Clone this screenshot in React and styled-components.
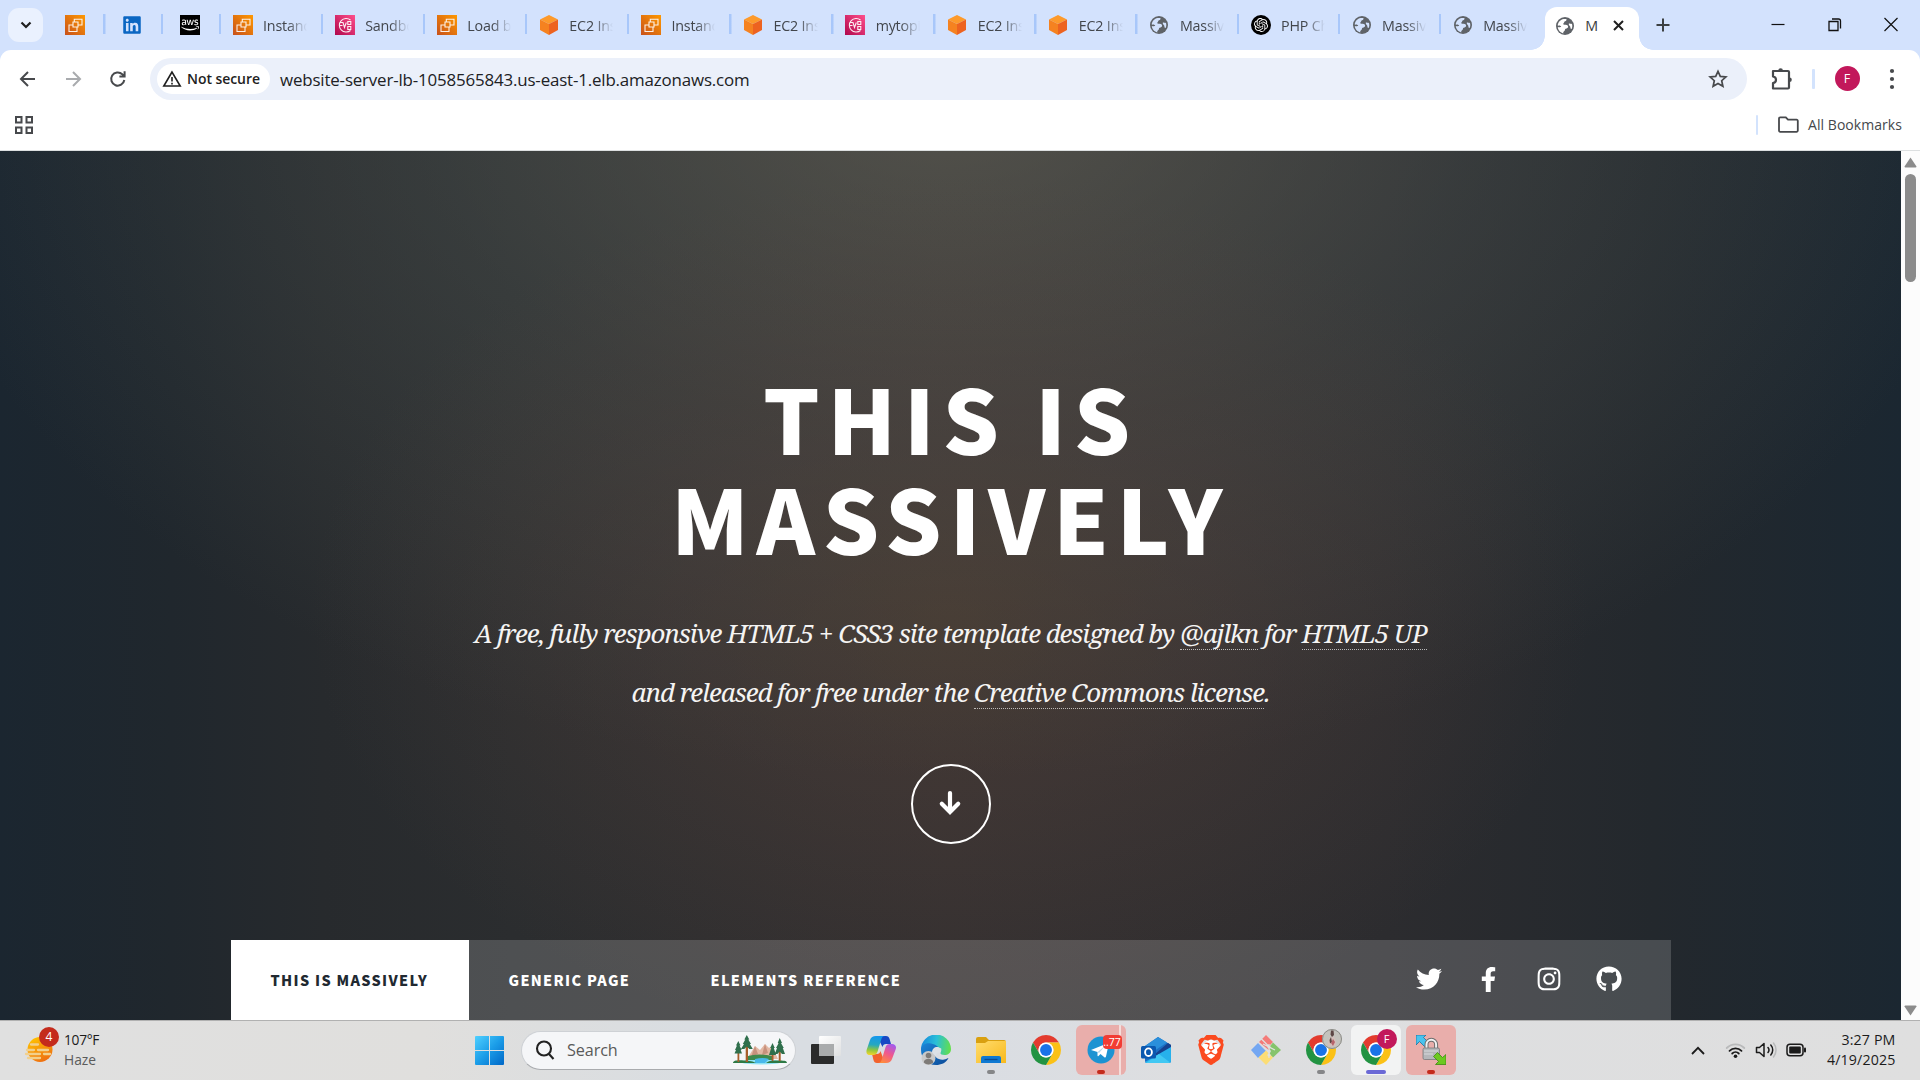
import React from 'react';
import styled, { createGlobalStyle } from 'styled-components';
import { FaTwitter, FaFacebookF, FaInstagram, FaGithub, FaLinkedin, FaAws } from 'react-icons/fa';
import { SiOpenai, SiBrave } from 'react-icons/si';

const GlobalStyle = createGlobalStyle`
  * { box-sizing: border-box; }
  body { margin: 0; overflow: hidden; }
  svg { display: block; flex: none; }
`;

const Screen = styled.div`
  width: 1920px;
  height: 1080px;
  display: flex;
  flex-direction: column;
  overflow: hidden;
  font-family: 'Open Sans', 'Noto Sans', sans-serif;
  color: #1f1f1f;
`;

/* ---------- tab strip ---------- */
const TabStrip = styled.header`
  height: 50px;
  flex: none;
  display: flex;
  background: #d3e2fd;
`;
const TabSearch = styled.button`
  width: 35px;
  height: 34px;
  margin: 8px 5px 0 8px;
  border: 0;
  padding: 0;
  border-radius: 11px;
  background: #eaf1fe;
  display: grid;
  place-items: center;
  flex: none;
`;
const Tab = styled.div`
  width: ${(p) => (p.$pinned ? 57.7 : p.$width)}px;
  height: 50px;
  flex: none;
  display: flex;
  align-items: center;
  padding-left: ${(p) => (p.$pinned ? 16.7 : 11.5)}px;
  background: ${(p) => (p.$last ? 'none' : 'linear-gradient(#a8c7fa, #a8c7fa) right 0 top 14px / 2.5px 20px no-repeat')};
`;
const TabIcon = styled.span`
  width: 20px;
  height: 20px;
  flex: none;
  display: grid;
  place-items: center;
`;
const TabTitle = styled.span`
  width: 45px;
  margin: 1px 0 0 10.5px;
  overflow: hidden;
  white-space: nowrap;
  font-size: 14.3px;
  line-height: 22px;
  letter-spacing: -0.2px;
  color: #42464c;
  mask-image: linear-gradient(90deg, #000 55%, transparent 98%);
`;
const ActiveTab = styled.div`
  width: 94px;
  height: 43px;
  margin: 7px 0 0 3px;
  flex: none;
  display: flex;
  align-items: center;
  gap: 10px;
  padding: 0 14px 6px 10px;
  border-radius: 12px 12px 0 0;
  background: #fff;
  font-size: 14.3px;
  position: relative;
  &::before, &::after {
    content: '';
    position: absolute;
    bottom: 0;
    width: 14px;
    height: 14px;
  }
  &::before { left: -14px; background: radial-gradient(circle at 0 0, transparent 13.5px, #fff 14px); }
  &::after { right: -14px; background: radial-gradient(circle at 100% 0, transparent 13.5px, #fff 14px); }
`;
const ActiveTitle = styled.span`
  width: 18px;
  overflow: hidden;
  line-height: 22px;
  letter-spacing: -0.5px;
  color: #3a3d41;
`;
const NewTab = styled.div`
  padding: 18px 0 0 17px;
`;
const WindowButtons = styled.div`
  margin-left: auto;
  display: flex;
  gap: 42.5px;
  padding: 17px 22px 0 0;
`;

/* ---------- toolbar ---------- */
const ToolbarWrap = styled.div`
  background: #d3e2fd;
  flex: none;
`;
const Toolbar = styled.div`
  height: 58px;
  display: flex;
  align-items: center;
  padding: 0 21px 1px 18px;
  background: #fff;
  border-radius: 11px 11px 0 0;
`;
const NavIcons = styled.div`
  display: flex;
  gap: 25px;
  margin-right: 22px;
`;
const Omnibox = styled.div`
  width: 1597px;
  height: 42px;
  border-radius: 21px;
  background: #ebf0fa;
  display: flex;
  align-items: center;
  padding: 0 19px 0 7px;
`;
const Security = styled.div`
  width: 113px;
  height: 30px;
  border-radius: 15px;
  background: #fff;
  display: flex;
  align-items: center;
  gap: 5px;
  padding-left: 5px;
  font-size: 14px;
  font-weight: 600;
  letter-spacing: -0.06px;
  white-space: nowrap;
`;
const Url = styled.span`
  flex: 1;
  margin: 2px 0 0 10px;
  font-size: 16.9px;
  letter-spacing: -0.16px;
  color: #202124;
`;
const ToolbarEnd = styled.div`
  flex: 1;
  display: flex;
  align-items: center;
  padding-left: 23px;
`;
const Rule = styled.i`
  width: 2.5px;
  height: 20px;
  border-radius: 1px;
  background: #d3e3fd;
  margin: ${(p) => p.$margin};
`;
const Avatar = styled.span`
  width: 25px;
  height: 25px;
  border-radius: 50%;
  background: #c2185b;
  color: #fff;
  font-size: 12.5px;
  line-height: 25px;
  text-align: center;
  margin-right: 27px;
`;
const BookmarkBar = styled.div`
  height: 43px;
  flex: none;
  display: flex;
  align-items: center;
  padding: 0 18px 9px 14px;
  background: #fff;
  border-bottom: 1px solid #dcdfe0;
  font-size: 14px;
  color: #45484c;
`;
const AllBookmarks = styled.div`
  margin-left: auto;
  display: flex;
  align-items: center;
  white-space: nowrap;
  svg { margin-right: 9px; }
  letter-spacing: 0.05px;
`;

/* ---------- page ---------- */
const Viewport = styled.div`
  height: 869px;
  flex: none;
  display: flex;
`;
const Hero = styled.main`
  width: 1901px;
  display: flex;
  flex-direction: column;
  align-items: center;
  color: #fff;
  background:
    radial-gradient(ellipse 640px 440px at 50% 53%, rgba(98, 74, 54, 0.4), rgba(96, 72, 62, 0.27) 42%, rgba(80, 66, 64, 0) 100%),
    radial-gradient(ellipse 1050px 680px at 50% -6%, rgba(106, 106, 94, 0.58), rgba(82, 90, 86, 0.34) 50%, rgba(58, 68, 72, 0) 100%),
    linear-gradient(90deg, #1b2630 0%, #20272d 9%, #272a2d 17%, #2b2d2f 27%, #322f30 50%, #2c2c2f 73%, #23282d 87%, #1b2731 100%);
`;
const Title = styled.h1`
  margin: 216px 0 0;
  width: 700px;
  text-align: center;
  text-transform: uppercase;
  font: 900 88.7px/100px 'Noto Sans CJK JP', 'Noto Sans', sans-serif;
  letter-spacing: 7.7px;
`;
const Intro = styled.p`
  margin: 36.5px 0 0;
  text-align: center;
  white-space: nowrap;
  font: italic 26px/59px 'Noto Serif', 'DejaVu Serif Condensed', 'DejaVu Serif', serif;
  letter-spacing: -1.07px;
  color: #f5f4f3;
`;
const Link = styled.a`
  display: inline-block;
  height: 34px;
  line-height: 35px;
  border-bottom: 1px dotted rgba(255, 255, 255, 0.65);
`;
const ScrollDown = styled.div`
  width: 80px;
  height: 80px;
  margin: 42px 0 0 1px;
  border: 2.5px solid #fff;
  border-radius: 50%;
  display: grid;
  place-items: center;
  padding: 0 3px 1px 0;
`;
const SiteNav = styled.nav`
  width: 1440px;
  height: 80px;
  margin-top: auto;
  display: flex;
  background: rgba(255, 255, 255, 0.17);
`;
const NavLink = styled.a`
  width: ${(p) => p.$width}px;
  height: 80px;
  padding-left: 40px;
  display: flex;
  align-items: center;
  white-space: nowrap;
  font: 900 14.4px/20px 'Noto Sans CJK JP', 'Noto Sans', sans-serif;
  letter-spacing: 1.33px;
  background: ${(p) => (p.$active ? '#fff' : 'none')};
  color: ${(p) => (p.$active ? '#212931' : '#fff')};
`;
const Social = styled.div`
  margin-left: auto;
  padding: 0 32px 2px 0;
  display: grid;
  grid-template-columns: repeat(4, 60px);
  align-items: center;
  justify-items: center;
`;
const ScrollTrack = styled.div`
  width: 19px;
  background: #fcfcfc;
  display: flex;
  flex-direction: column;
  align-items: center;
  padding: 6px 0 4px;
`;
const ScrollThumb = styled.div`
  width: 11px;
  height: 108px;
  margin: 6px 0 auto;
  border-radius: 6px;
  background: #8b8b8b;
`;

/* ---------- taskbar ---------- */
const Taskbar = styled.footer`
  height: 60px;
  flex: none;
  display: flex;
  align-items: center;
  padding-bottom: 1px;
  border-top: 1px solid #b1b1b1;
  background: linear-gradient(90deg, #e0e0e0 0%, #e0dfdd 22%, #d9dde1 36%, #d9dde3 48%, #dddee0 62%, #dfdfdf 100%);
`;
const Weather = styled.div`
  width: 475px;
  display: flex;
  align-items: center;
  gap: 10px;
  padding-left: 24px;
`;
const WeatherText = styled.div`
  font-size: 13.8px;
  line-height: 20px;
  letter-spacing: -0.3px;
  color: #1b1b1b;
  span { display: block; color: #5b5b5b; letter-spacing: 0; }
`;
const SearchBox = styled.div`
  width: 275px;
  height: 39px;
  margin: 0 2px 0 17px;
  border-radius: 20px;
  border: 1px solid #ced1d5;
  border-bottom-color: #a9abae;
  background: #f5f6f8;
  display: flex;
  align-items: center;
  padding: 0 8px 0 13px;
  font-size: 16.2px;
  letter-spacing: -0.1px;
  color: #5a5a5a;
  gap: 12px;
  svg:last-child { margin-left: auto; }
`;
const Slot = styled.div`
  width: ${(p) => (p.$fill ? 50 : 55)}px;
  height: 50px;
  margin: 0 ${(p) => (p.$fill ? 2.5 : 0)}px;
  flex: none;
  display: flex;
  flex-direction: column;
  align-items: center;
  padding-top: 10px;
  gap: 5px;
  border-radius: 6px;
  background: ${(p) => p.$fill || 'none'};
`;
const GroupEdge = styled(Slot)`
  background: linear-gradient(90deg, #e9aeab 0 43px, #f4dddb 43px 45px, #e9aeab 45px);
`;
const AppIcon = styled.div`
  width: 30px;
  height: 30px;
  position: relative;
`;
const Indicator = styled.i`
  width: ${(p) => p.$width || 8}px;
  height: 4px;
  border-radius: 2px;
  background: ${(p) => p.$color};
`;
const CountBadge = styled.span`
  position: absolute;
  left: 17px;
  top: 0;
  width: 19px;
  height: 14px;
  border-radius: 4px;
  background: #f23c34;
  color: #fff;
  font-size: 10.5px;
  line-height: 14px;
  text-align: center;
`;
const ProfileBadge = styled.span`
  position: absolute;
  left: 16px;
  top: -6px;
  width: 20px;
  height: 20px;
  border-radius: 50%;
  background: ${(p) => p.$bg};
  color: #fff;
  font-size: 11px;
  line-height: 20px;
  text-align: center;
`;
const Tray = styled.div`
  margin-left: auto;
  display: flex;
  align-items: center;
  padding-right: 24.5px;
`;
const TrayChevron = styled.span`
  margin-right: 2px;
`;
const Clock = styled.div`
  width: 80px;
  margin-left: 9px;
  text-align: right;
  font-size: 14.2px;
  line-height: 20.5px;
  letter-spacing: 0.15px;
  color: #1b1b1b;
`;

/* ---------- icons ---------- */
const Ec2Icon = () => (
  <svg width="20" height="20" viewBox="0 0 20 20" fill="none" stroke="#fff" strokeOpacity=".9">
    <defs><linearGradient id="ec2" x1="0" y1="1" x2="1" y2="0"><stop stopColor="#c8511b" /><stop offset="1" stopColor="#f90" /></linearGradient></defs>
    <rect width="20" height="20" fill="url(#ec2)" stroke="none" />
    <path d="M8 7h5v5H8zM9.300 7V4.200H17V10h-4M12 12v4.500H4V10h4" strokeWidth="1.100" />
  </svg>
);
const PinkIcon = () => (
  <svg width="20" height="20" viewBox="0 0 20 20" fill="none" stroke="#fff" strokeWidth="1.100" strokeOpacity=".92">
    <defs><linearGradient id="pink" x1="0" y1="1" x2="1" y2="0"><stop stopColor="#b0084d" /><stop offset="1" stopColor="#ff4f8b" /></linearGradient></defs>
    <rect width="20" height="20" fill="url(#pink)" stroke="none" />
    <path d="M15.500 5A6.800 6.800 0 1 0 15.500 15.500M4.500 7.500h3.500l1.500 5 1.800-5M5 10.500h2.500M12.800 6.500h3v3h-3zM12.800 11.500h3v3h-3z" />
  </svg>
);
const CubeIcon = () => (
  <svg width="18" height="20" viewBox="0 0 18 20">
    <path d="M9 0l9 4.500L9 9 0 4.500z" fill="#fd9a2b" />
    <path d="M0 4.500L9 9v11l-9-5z" fill="#f58220" />
    <path d="M18 4.500L9 9v11l9-5z" fill="#ed6320" />
  </svg>
);
const GlobeIcon = ({ light = '#d3e2fd' }) => (
  <svg width="18" height="18" viewBox="0 0 18 18">
    <circle cx="9" cy="9" r="9" fill="#5f6368" />
    <path d="M1.700 8.500C2 5 4.500 2.400 7.600 1.900L10.400 2c.3 1.200-.2 2-1.300 2.300-.9.300-.8 1.300-1.500 1.900-.8.600-.3 1.500.7 1.500 1.800 0 3.700.2 3.800 1.800.1 1.500-1.200 2-2.400 2.200-1 .2-.4 1.700-1.400 2.400-.7.500-1.300 1.300-1 2.300C4.600 15.700 2 13.200 1.800 10c1.300.3 2.900.5 3.300-.2C5.600 8.700 3 8.700 1.700 8.500z" fill={light} />
    <path d="M13 6.300c1.300.8 2.200.2 3 .8.5 1.500.4 3.200-.3 4.900-1 0-1.500-.7-1.300-1.700.2-1.300-2.300-1.800-1.400-4z" fill={light} />
  </svg>
);
const LinkedinIcon = () => <FaLinkedin size={20} color="#0a66c2" />;
const DarkTile = styled.span`
  width: 20px;
  height: 20px;
  border-radius: ${(p) => (p.$round ? '50%' : 0)};
  background: #000;
  color: #fff;
  display: grid;
  place-items: center;
`;
const AwsIcon = () => (
  <DarkTile>
    <FaAws size={18} />
  </DarkTile>
);
const GptIcon = () => <DarkTile $round><SiOpenai size={14} /></DarkTile>;

const Line = ({ w, h, d, color = '#47494c', sw = 2, cap = 'butt' }) => (
  <svg width={w} height={h} viewBox={`0 0 ${w} ${h}`} fill="none" stroke={color} strokeWidth={sw} strokeLinecap={cap}>
    <path d={d} />
  </svg>
);

const ChromeIcon = () => {
  const blade = 'M19.050-11A22 22 0 0 0-19.050-11L-9.530 5.500A11 11 0 0 1 0-11z';
  return (
    <svg width="30" height="30" viewBox="-22 -22 44 44">
      <path d={blade} fill="#e33b2e" />
      <path d={blade} fill="#fbc116" transform="rotate(120)" />
      <path d={blade} fill="#229342" transform="rotate(240)" />
      <circle r="11" fill="#fff" />
      <circle r="8.700" fill="#1a73e8" />
    </svg>
  );
};
const WindowsIcon = () => (
  <svg width="29" height="29" viewBox="0 0 29 29">
    <defs><linearGradient id="win" x1="0" y1="0" x2="1" y2="1"><stop stopColor="#4fd0ff" /><stop offset=".5" stopColor="#1b9de8" /><stop offset="1" stopColor="#0067c7" /></linearGradient></defs>
    <path d="M1 0h13v14H0V1a1 1 0 0 1 1-1zM15 0h13a1 1 0 0 1 1 1v13H15zM0 15h14v14H1a1 1 0 0 1-1-1zM15 15h14v13a1 1 0 0 1-1 1H15z" fill="url(#win)" />
  </svg>
);
const ForestIcon = () => (
  <svg width="54" height="30" viewBox="0 0 54 30">
    <path d="M14 24l8-13 5 4 5-6 4 4 3-2 6 13z" fill="#e3b8a4" />
    <path d="M18 22l4-11 3 8zM29 20l3-11 3 9z" fill="#c7917d" />
    <ellipse cx="28" cy="27" rx="20" ry="2.500" fill="#8fe3f5" />
    <path d="M15 21q10-3 24 0v4H15z" fill="#3f8a4d" />
    <path d="M22 24q8-2 14 0l-4 4h-10z" fill="#49b8ea" />
    <path d="M0 28c0-3 6-3 11-2.500 6 0 9 1 12 2.500zM33 28c3-2.500 8-2.500 12-2.500 5 0 9 0 9 2.500z" fill="#2e7a45" />
    <path d="M4.500 12h1.800v15H4.500zM12.700 4h2.300v23h-2.300zM38.700 12h1.800v14h-1.800zM45.700 8h2v18h-2z" fill="#a85f2c" />
    <path d="M5.300 6l2.200 4.500h-1l2.200 4.500h-1l1.300 3.500H1.500L3 15H2l2-4.500H3zM13.800 0l2.500 4.500h-1l2.700 4.500h-1.200l3 5h-3.500l-2.500-2.500L11.300 14H8l3-5H9.800l2.500-4.500h-1zM39.500 8l2.300 5h-1l2.200 7h-7l2.200-7h-1zM46.700 3l2.300 5h-1l2.800 5h-1l2.200 6h-3l-2.300-2.500-2.300 2.500h-2.600l2.200-6h-1l2.700-5h-1z" fill="#2f6f4c" />
  </svg>
);
const TaskViewIcon = () => (
  <svg width="30" height="30" viewBox="0 0 30 30">
    <defs>
      <linearGradient id="tv" x1="0" y1="0" x2="1" y2="1"><stop stopColor="#fff" /><stop offset="1" stopColor="#dfe0e1" /></linearGradient>
    </defs>
    <rect y="9" width="23" height="20" rx="1" fill="#2b2b2b" />
    <rect x="8" y="1" width="22" height="20" rx="1" fill="url(#tv)" />
    <rect x="8" y="9" width="15" height="12" fill="#a9abac" />
  </svg>
);
const CopilotIcon = () => (
  <svg width="30" height="30" viewBox="0 0 30 30">
    <defs>
      <linearGradient id="cpa" x1=".3" y1="0" x2=".2" y2="1"><stop stopColor="#1597ec" /><stop offset=".45" stopColor="#25a8c0" /><stop offset=".72" stopColor="#8dc63f" /><stop offset="1" stopColor="#f5d62c" /></linearGradient>
      <linearGradient id="cpb" x1=".8" y1="0" x2=".3" y2="1"><stop stopColor="#a05bf0" /><stop offset=".5" stopColor="#f0588d" /><stop offset="1" stopColor="#ff8b3d" /></linearGradient>
    </defs>
    <path d="M11 1h9c2 0 3 1 3.600 3L25 9h-5c-2 0-3 1-3.500 3z" fill="#1748c4" />
    <path d="M19 28h-8c-2 0-3-1-3.500-3L6 19h5c2 0 3-1 3.500-3z" fill="#f2622e" />
    <path d="M10 1h9c-2 0-3 1-3.600 3l-4 13c-.6 2-2 3-4 3H4c-3 0-4-2-3.400-5L4 5c.8-2.500 3-4 6-4z" fill="url(#cpa)" />
    <path d="M20 28h-8c2 0 3-1 3.600-3l4-13c.6-2 2-3 4-3H26c3 0 4.600 2 3.800 5L26 24c-.8 2.500-3 4-6 4z" fill="url(#cpb)" />
  </svg>
);
const EdgeIcon = () => (
  <svg width="30" height="30" viewBox="0 0 30 30">
    <defs>
      <linearGradient id="ega" x1="0" y1=".4" x2="1" y2=".5"><stop stopColor="#1688dc" /><stop offset=".5" stopColor="#29bfd8" /><stop offset="1" stopColor="#63df4c" /></linearGradient>
      <linearGradient id="egb" x1="0" y1="0" x2="1" y2="1"><stop stopColor="#1b86d8" /><stop offset="1" stopColor="#0c4a98" /></linearGradient>
    </defs>
    <path d="M0 15A15 15 0 0 1 30 14c0 4-3 6-6.500 6-3 0-4.500-1-4-2.500 1-1.500 1-3 .5-4.500-4 2-12 4-20 2z" fill="url(#ega)" />
    <path d="M0 15C0 9.500 5 7.500 10 8.500c5 1 8.500 4 9.500 7-3-2.500-6-1.500-6.500 1.500-.5 5 5 8.500 10 7.500 2-.4 3.500-1.200 4.500-1.500C25 28 20 30 15 30 6 30 0 23 0 15z" fill="url(#egb)" />
    <circle cx="7.500" cy="23" r="7" fill="#c9c9c9" />
    <path d="M11 17.500c0-4 3-6 6-5.500 2.500.5 3.500 3 2.500 5.500l-4 .5c-.5 1.500-.5 3 0 4.500z" fill="#dce1e6" />
    <circle cx="7.500" cy="20.500" r="2.800" fill="#7e7b78" />
    <path d="M2.800 27.500c0-5 9.400-5 9.400 0-2.500 2.500-7 2.500-9.400 0z" fill="#7e7b78" />
  </svg>
);
const FolderIcon = () => (
  <svg width="30" height="30" viewBox="0 0 30 30">
    <defs><linearGradient id="fd" x1="0" y1="0" x2="1" y2="1"><stop stopColor="#ffdc6e" /><stop offset="1" stopColor="#f8b91b" /></linearGradient></defs>
    <path d="M0 4a2 2 0 0 1 2-2h8l3 3h15a2 2 0 0 1 2 2v5H0z" fill="#d9a010" />
    <path d="M0 8h9l3-2h18v22H0z" fill="url(#fd)" />
    <path d="M5 28v-5a2 2 0 0 1 2-2h16a2 2 0 0 1 2 2v5z" fill="#0f79d2" />
    <path d="M8.500 24.500h13" stroke="#0b4c93" strokeWidth="1.300" />
  </svg>
);
const TelegramIcon = () => (
  <svg width="30" height="30" viewBox="0 0 30 30">
    <circle cx="15" cy="15" r="13.500" fill="#1d93d2" />
    <path d="M5 15L21 8.500c1.200-.4 1.800.2 1.500 1.500L20 21.500c-.2 1-.9 1.200-1.700.7L14.500 19l-2 2c-.6.500-1 .3-1-.5v-3.500z" fill="#fff" />
    <path d="M11.500 17l8-6.500-6.500 7.500z" fill="#b9d8ec" />
  </svg>
);
const OutlookIcon = () => (
  <svg width="30" height="30" viewBox="0 0 30 30">
    <path d="M4 11L17 2l13 8v16a2 2 0 0 1-2 2H6a2 2 0 0 1-2-2z" fill="#1d6fc4" />
    <path d="M4 11L17 2l9 5.500L10 18z" fill="#2a8fdb" />
    <path d="M14 19L27 8l3 2v2.500L17 22z" fill="#16418f" />
    <path d="M4 27l26-15v14a2 2 0 0 1-2 2H5z" fill="#27b1ec" />
    <path d="M5 28l13-9 11 8.500-1 .5z" fill="#41c8f3" />
    <rect y="11" width="15" height="12.500" rx="1.500" fill="#0a58b0" />
    <ellipse cx="7.500" cy="17.200" rx="3.400" ry="3.800" fill="none" stroke="#fff" strokeWidth="1.900" />
  </svg>
);
const BraveTile = styled.div`
  width: 30px;
  height: 30px;
  display: grid;
  place-items: center;
  color: #fb4a1f;
  background: radial-gradient(circle at 50% 50%, #fff 9.500px, transparent 10px);
`;
const GitIcon = () => (
  <svg width="30" height="30" viewBox="0 0 30 30">
    <path d="M15 0l7 7-3.500 3.500 1.800 1.800-2.600 2.600L8 7z" fill="#f47b79" />
    <path d="M0 15l7-7 8 8-8 7z" fill="#74a7f2" />
    <path d="M22 7.500l8 7.500-8 7.500-3.500-3.500 1.500-3-2.500-3z" fill="#86c46c" />
    <path d="M15 15.500l7 7L15 30l-7.500-7.500z" fill="#fbdd76" />
    <path d="M10 3.500l9 9M18 9v14M12 9l12 6" stroke="#e0e0e0" strokeWidth="1.200" />
    <circle cx="18" cy="12" r="1.600" fill="#e0e0e0" /><circle cx="18" cy="20" r="1.600" fill="#e0e0e0" />
  </svg>
);
const LockSyncIcon = () => (
  <svg width="30" height="30" viewBox="0 0 30 30">
    <path d="M0 0h10L7.500 2.500l5 5-4 4-5-5L0 10z" fill="#49c3ee" stroke="#1d6f9c" strokeWidth=".8" />
    <path d="M10.500 15V9.500a4.800 4.800 0 0 1 9.600 0V15" fill="none" stroke="#6d6d6d" strokeWidth="4" />
    <path d="M10.500 15V9.500a4.800 4.800 0 0 1 9.600 0V15" fill="none" stroke="#f2f2f2" strokeWidth="2" />
    <rect x="7" y="13" width="16.500" height="11.500" rx="1.500" fill="#b5b7ba" stroke="#77797c" strokeWidth=".8" />
    <path d="M8 16h14M8 19h9" stroke="#d8d9db" strokeWidth="1.200" />
    <path d="M30 29.500H19.500l3-3-5-5 4-4 5 5 3.500-3z" fill="#6cc920" stroke="#3c8a10" strokeWidth=".8" />
  </svg>
);
const HazeIcon = () => (
  <svg width="30" height="30" viewBox="0 0 30 30">
    <defs><linearGradient id="hz" x1=".2" y1="0" x2=".7" y2="1"><stop stopColor="#ffc400" /><stop offset="1" stopColor="#ee6c12" /></linearGradient></defs>
    <circle cx="16" cy="15.500" r="12.500" fill="url(#hz)" />
    <path d="M7 10.500h7M3 16h7M14 16h10M2 20h14M20 20h6M4 24h12" stroke="#f2d08c" strokeWidth="2.300" strokeLinecap="round" />
  </svg>
);
const WeatherIcon = styled.div`
  position: relative;
  margin-top: -2px;
`;
const AlertBadge = styled.span`
  position: absolute;
  left: 15px;
  top: -7px;
  width: 20px;
  height: 20px;
  border-radius: 50%;
  background: #c42b1c;
  color: #fff;
  font-size: 12px;
  line-height: 20px;
  text-align: center;
`;
const PhotoAvatar = () => (
  <svg width="20" height="20" viewBox="0 0 20 20">
    <circle cx="10" cy="10" r="9.500" fill="#c4c3bd" stroke="#8c8c88" />
    <path d="M7.500 9l4-2 3 6-1 4-6 1-2-3z" fill="#d3bfba" />
    <path d="M9 1.500h2.500l.5 4.500-2 2-1.500-2.500zM7.500 11l1.500-3 1 5-2 1.500z" fill="#5d4644" />
    <path d="M11 10l2 3-2 4-2-3z" fill="#b8636a" />
  </svg>
);

const pinnedTabs = [Ec2Icon, LinkedinIcon, AwsIcon];
const tabs = [
  [Ec2Icon, 'Instances', 102.1], [PinkIcon, 'Sandbox', 102.1], [Ec2Icon, 'Load balancers', 102.1], [CubeIcon, 'EC2 Instance', 102.1],
  [Ec2Icon, 'Instances', 102.1], [CubeIcon, 'EC2 Instance', 102.1], [PinkIcon, 'mytopic', 102.1], [CubeIcon, 'EC2 Instance', 101.1],
  [CubeIcon, 'EC2 Instance', 101.1], [GlobeIcon, 'Massively', 101.1], [GptIcon, 'PHP Check', 101.1],
  [GlobeIcon, 'Massively', 101.1], [GlobeIcon, 'Massively', 101.1],
];
const pages = [['THIS IS MASSIVELY', true, 238], ['GENERIC PAGE', false, 202], ['ELEMENTS REFERENCE', false, 270]];

export default function App() {
  return (
    <Screen>
      <GlobalStyle />
      <TabStrip>
        <TabSearch><Line w={12} h={8} d="M1.500 1.500L6 6l4.500-4.500" color="#1f1f1f" sw={2.2} /></TabSearch>
        {pinnedTabs.map((Icon, i) => (
          <Tab key={i} $pinned><TabIcon><Icon /></TabIcon></Tab>
        ))}
        {tabs.map(([Icon, title, width], i) => (
          <Tab key={i} $width={width} $last={i === tabs.length - 1}>
            <TabIcon><Icon /></TabIcon>
            <TabTitle>{title}</TabTitle>
          </Tab>
        ))}
        <ActiveTab>
          <TabIcon><GlobeIcon light="#fff" /></TabIcon>
          <ActiveTitle>M</ActiveTitle>
          <Line w={11} h={11} d="M1 1l9 9M10 1l-9 9" color="#1f1f1f" sw={2} />
        </ActiveTab>
        <NewTab><Line w={14} h={14} d="M7 .500v13M.500 7h13" color="#3c4043" /></NewTab>
        <WindowButtons>
          <Line w={14} h={14} d="M.500 7.500h13" color="#111" sw={1.2} />
          <Line w={14} h={15} d="M1 4.500h9v9H1zM4 2h6.500a2 2 0 0 1 2 2v7.500" color="#111" sw={1.3} />
          <Line w={14} h={15} d="M.500 1l13 13M13.500 1l-13 13" color="#111" sw={1.2} />
        </WindowButtons>
      </TabStrip>

      <ToolbarWrap>
        <Toolbar>
          <NavIcons>
            <Line w={20} h={20} d="M17 10H3.500M10 3l-7 7 7 7" />
            <Line w={20} h={20} d="M3 10h13.500M10 3l7 7-7 7" color="#a9abae" />
            <Line w={20} h={20} d="M16.300 11a6.600 6.600 0 1 1-2-5.800L16.300 7M16.600 2.200V7.400h-5.200" />
          </NavIcons>
          <Omnibox>
            <Security>
              <Line w={20} h={18} d="M10 2L1.800 16h16.400zM10 7v4.500M10 12.800v1.700" color="#1f1f1f" sw={1.6} />
              Not secure
            </Security>
            <Url>website-server-lb-1058565843.us-east-1.elb.amazonaws.com</Url>
            <Line w={20} h={20} d="M10 2.300l2.300 5.100 5.600.6-4.200 3.700 1.200 5.500L10 14.400l-4.900 2.800 1.200-5.500L2.100 8l5.600-.6z" sw={1.7} />
          </Omnibox>
          <ToolbarEnd>
            <svg width="24" height="24" viewBox="0 0 24 24" fill="none" stroke="#47494c" strokeWidth="2.200">
              <path d="M3 4H18a1 1 0 0 1 1 1v15.500a1 1 0 0 1-1 1H3V16c4-.500 4-6 0-6.500z" strokeLinejoin="round" />
              <path d="M8.300 3.500a2.300 2.300 0 0 1 4.600 0zM19.500 10.500a2.300 2.300 0 0 1 0 4.600z" fill="#47494c" stroke="none" />
            </svg>
            <Rule $margin="0 20px 0 18px" />
            <Avatar>F</Avatar>
            <svg width="10" height="22" viewBox="0 0 10 22" fill="#47494c"><circle cx="5" cy="3" r="2.100" /><circle cx="5" cy="11" r="2.100" /><circle cx="5" cy="19" r="2.100" /></svg>
          </ToolbarEnd>
        </Toolbar>
      </ToolbarWrap>

      <BookmarkBar>
        <Line w={20} h={20} d="M2 2h5.500v5.500H2zM12.500 2H18v5.500h-5.500zM2 12.500h5.500V18H2zM12.500 12.500H18V18h-5.500z" />
        <AllBookmarks>
          <Rule $margin="0 20px 0 0" />
          <Line w={21} h={18} d="M1 14.500v-12a1.200 1.200 0 0 1 1.200-1.200h5.600l2.200 2.400h8.600A1.200 1.200 0 0 1 19.800 5v9.600a1.200 1.200 0 0 1-1.200 1.200H2.200A1.200 1.200 0 0 1 1 14.500z" sw={1.8} />
          All Bookmarks
        </AllBookmarks>
      </BookmarkBar>

      <Viewport>
        <Hero>
          <Title>This is<br />Massively</Title>
          <Intro>
            A free, fully responsive HTML5 + CSS3 site template designed by <Link>@ajlkn</Link> for <Link>HTML5 UP</Link><br />
            and released for free under the <Link>Creative Commons license</Link>.
          </Intro>
          <ScrollDown>
            <Line w={24} h={26} d="M12 3v19M3.800 13.800L12 22l8.200-8.200" color="#fff" sw={4.2} cap="round" />
          </ScrollDown>
          <SiteNav>
            {pages.map(([label, active, width]) => (
              <NavLink key={label} $active={active} $width={width}>{label}</NavLink>
            ))}
            <Social>
              <FaTwitter size={26} />
              <FaFacebookF size={25} />
              <FaInstagram size={26} />
              <FaGithub size={26} />
            </Social>
          </SiteNav>
        </Hero>
        <ScrollTrack>
          <svg width="13" height="11" viewBox="0 0 13 11"><path d="M6.500.5l6 9q0 1-1 1H1.500q-1 0-1-1z" fill="#8b8b8b" /></svg>
          <ScrollThumb />
          <svg width="13" height="11" viewBox="0 0 13 11"><path d="M6.500 10.500l6-9q0-1-1-1H1.500q-1 0-1 1z" fill="#8b8b8b" /></svg>
        </ScrollTrack>
      </Viewport>

      <Taskbar>
        <Weather>
          <WeatherIcon><HazeIcon /><AlertBadge>4</AlertBadge></WeatherIcon>
          <WeatherText>107°F<span>Haze</span></WeatherText>
        </Weather>
        <WindowsIcon />
        <SearchBox>
          <Line w={20} h={20} d="M13.800 13.800L18.500 19M16 8.500A7 7 0 1 1 2 8.500a7 7 0 0 1 14 0z" color="#222" sw={2.1} />
          Search
          <ForestIcon />
        </SearchBox>
        <Slot><AppIcon><TaskViewIcon /></AppIcon></Slot>
        <Slot><AppIcon><CopilotIcon /></AppIcon></Slot>
        <Slot><AppIcon><EdgeIcon /></AppIcon></Slot>
        <Slot><AppIcon><FolderIcon /></AppIcon><Indicator $color="#858688" /></Slot>
        <Slot><AppIcon><ChromeIcon /></AppIcon></Slot>
        <GroupEdge $fill="#e9aeab"><AppIcon><TelegramIcon /><CountBadge>..77</CountBadge></AppIcon><Indicator $color="#c42b1c" /></GroupEdge>
        <Slot><AppIcon><OutlookIcon /></AppIcon></Slot>
        <Slot><AppIcon><BraveTile><SiBrave size={30} /></BraveTile></AppIcon></Slot>
        <Slot><AppIcon><GitIcon /></AppIcon></Slot>
        <Slot><AppIcon><ChromeIcon /><ProfileBadge $bg="#c4c3bd"><PhotoAvatar /></ProfileBadge></AppIcon><Indicator $color="#858688" /></Slot>
        <Slot $fill="#f2f3f3"><AppIcon><ChromeIcon /><ProfileBadge $bg="#c2185b">F</ProfileBadge></AppIcon><Indicator $color="#6b69d6" $width={20} /></Slot>
        <Slot $fill="#e9aeab"><AppIcon><LockSyncIcon /></AppIcon><Indicator $color="#c42b1c" /></Slot>
        <Tray>
          <TrayChevron><Line w={14} h={9} d="M1 8l6-6.200L13 8" color="#1b1b1b" sw={1.8} /></TrayChevron>
          <svg width="60" height="22" viewBox="-18.500 -1 60 22" fill="none" strokeWidth="1.800" strokeLinecap="round">
            <path d="M1.200 8a12.500 12.500 0 0 1 17.600 0" stroke="#b9babb" />
            <path d="M4 10.800a8.600 8.600 0 0 1 12 0M6.700 13.500a4.700 4.700 0 0 1 6.600 0" stroke="#1b1b1b" />
            <circle cx="10" cy="16.200" r="1.800" fill="#1b1b1b" />
            <path d="M31 7.500h3L38.500 3.500v13l-4.500-4h-3z" stroke="#1b1b1b" strokeWidth="1.500" strokeLinejoin="round" />
          </svg>
          <svg width="40" height="22" viewBox="0 -1 40 22" fill="none" stroke="#1b1b1b" strokeWidth="1.500" strokeLinecap="round">
            <path d="M1 7.500a4 4 0 0 1 0 5M3.800 5a7.500 7.500 0 0 1 0 10" />
            <path d="M6.500 3a11 11 0 0 1 0 14" stroke="#b9babb" />
            <rect x="20" y="4.300" width="16" height="11.400" rx="3" />
            <rect x="22.200" y="6.500" width="11.600" height="7" rx="1" fill="#1b1b1b" stroke="none" />
            <path d="M38 8.500v3" strokeWidth="2" />
          </svg>
          <Clock>3:27 PM<br />4/19/2025</Clock>
        </Tray>
      </Taskbar>
    </Screen>
  );
}
